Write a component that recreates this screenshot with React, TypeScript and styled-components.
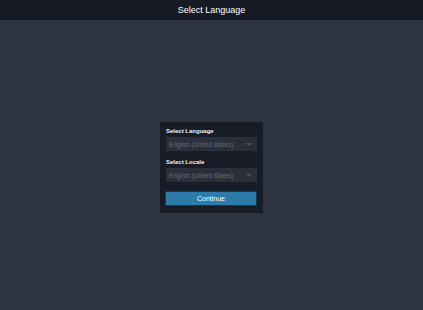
import React from 'react';
import styled, { createGlobalStyle } from 'styled-components';

const GlobalStyle = createGlobalStyle`
  html, body {
    margin: 0;
    padding: 0;
    background: #2d3441;
    font-family: "Liberation Sans", Arial, sans-serif;
  }
`;

const Page = styled.div`
  display: flex;
  flex-direction: column;
  height: 310px;
  background: #2d3441;
`;

const Header = styled.header`
  height: 20px;
  flex-shrink: 0;
  background: #161a24;
  color: #ffffff;
  font-size: 9px;
  display: flex;
  align-items: center;
  justify-content: center;
`;

const Main = styled.main`
  flex: 1;
  display: flex;
  align-items: center;
  justify-content: center;
  padding-top: 5px;
`;

const Panel = styled.div`
  width: 103px;
  box-sizing: border-box;
  background: #181c27;
  padding: 5px 6px 7px 6px;
  display: flex;
  flex-direction: column;
`;

const Label = styled.label`
  color: #f2f2f2;
  font-size: 6px;
  font-weight: bold;
  line-height: 9px;
  margin-bottom: 1px;
`;

const SelectBox = styled.div<{ last?: boolean }>`
  height: 14px;
  background: #2a2f3b;
  color: #666c78;
  font-size: 6.3px;
  display: flex;
  align-items: center;
  justify-content: space-between;
  padding: 0 5px 0 3px;
  margin-bottom: ${p => (p.last ? '9px' : '7px')};
`;

const Caret = styled.span`
  width: 0;
  height: 0;
  border-left: 3px solid transparent;
  border-right: 3px solid transparent;
  border-top: 3px solid #4b505b;
`;

const Button = styled.button`
  height: 15px;
  width: 92px;
  margin-left: -1px;
  box-sizing: border-box;
  background: #2b7bab;
  border: 1px solid #13384f;
  border-radius: 1px;
  color: #ffffff;
  font-family: inherit;
  font-size: 7px;
  padding: 0;
  cursor: pointer;
`;

export default function App() {
  return (
    <>
      <GlobalStyle />
      <Page>
        <Header>Select Language</Header>
        <Main>
          <Panel>
            <Label>Select Language</Label>
            <SelectBox>
              <span>English (United States)</span>
              <Caret />
            </SelectBox>
            <Label>Select Locale</Label>
            <SelectBox last>
              <span>English (United States)</span>
              <Caret />
            </SelectBox>
            <Button>Continue</Button>
          </Panel>
        </Main>
      </Page>
    </>
  );
}
